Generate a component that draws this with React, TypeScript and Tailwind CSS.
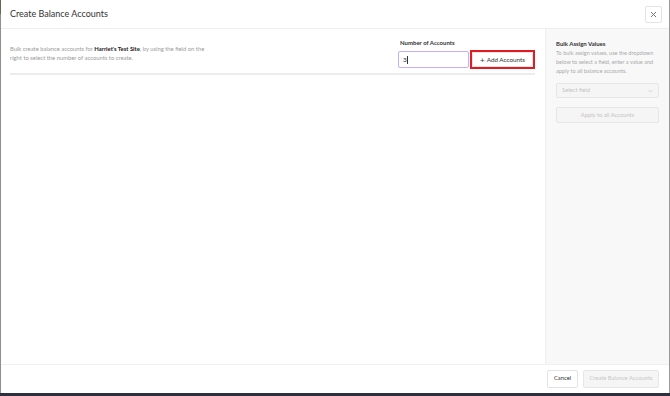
import React from "react";

export default function App() {
  return (
    <div
      className="w-[670px] h-[396px] flex flex-col bg-white overflow-hidden"
      style={{ fontFamily: "Lato, 'Noto Sans', sans-serif" }}
    >
      <div className="flex-1 flex min-h-0">
        <div className="w-[1px] flex flex-col bg-[#8f8f8f]">
          <div className="h-[14px] bg-[#5f6b4f]" />
        </div>
        <div className="flex-1 flex flex-col min-w-0">
          {/* Header */}
          <div className="h-[29px] flex items-center justify-between pl-[9px] pr-[7px] border-b border-[#eeeeee]">
            <div className="text-[9px] text-[#333]">Create Balance Accounts</div>
            <div className="w-[17px] h-[17px] border border-[#e3e3e3] rounded-[2px] flex items-center justify-center">
              <svg width="7" height="7" viewBox="0 0 7 7">
                <path d="M1 1L6 6M6 1L1 6" stroke="#777" strokeWidth="1" />
              </svg>
            </div>
          </div>
          {/* Body */}
          <div className="flex-1 flex min-h-0">
            <div className="flex-1 pl-[9px] pr-[10px] pt-[10px]">
              <div className="flex justify-between items-start">
                <div className="text-[5.85px] leading-[9px] text-[#9b9b9b] w-[200px] pt-[5px]">
                  Bulk create balance accounts for{" "}
                  <span className="font-bold text-[#222]">Harriet's Test Site</span>, by using the field on the right to
                  select the number of accounts to create.
                </div>
                <div className="flex flex-col">
                  <div className="text-[6px] font-bold text-[#333] leading-[8px] mb-[3px] pl-[2px]">
                    Number of Accounts
                  </div>
                  <div className="flex items-center gap-[1px]">
                    <div className="w-[71px] h-[17px] border border-[#c3b0ef] rounded-[2px] flex items-center pl-[4px] text-[6.5px] text-[#333]">
                      3<span className="w-[1px] h-[8px] bg-[#333]" />
                    </div>
                    <div className="border-2 border-[#e01b24]">
                      <div className="w-[61px] h-[15px] border border-[#e6e6e6] rounded-[2px] flex items-center justify-center text-[6.3px] text-[#333]">
                        <span className="text-[8px] mr-[2px] leading-none">+</span>Add Accounts
                      </div>
                    </div>
                  </div>
                </div>
              </div>
              <div className="h-[2px] bg-[#ececec] mt-[4px]" />
            </div>
            {/* Sidebar */}
            <div className="w-[124px] bg-[#f8f8f8] border-l border-[#eeeeee] pl-[10px] pr-[10px] pt-[10px]">
              <div className="text-[6px] font-bold text-[#333] leading-[8px] mt-[1px]">Bulk Assign Values</div>
              <div className="text-[5.55px] leading-[9px] text-[#aaa] mt-[1px]">
                To bulk assign values, use the dropdown below to select a field, enter a value and apply to all
                balance accounts.
              </div>
              <div className="mt-[7px] h-[15px] border border-[#e6e6e6] rounded-[2px] bg-[#f5f5f5] flex items-center justify-between px-[5px] text-[5.8px] text-[#c4c4c4]">
                <span>Select field</span>
                <svg width="5" height="4" viewBox="0 0 5 4">
                  <path d="M0.5 1L2.5 3L4.5 1" stroke="#ccc" strokeWidth="0.8" fill="none" />
                </svg>
              </div>
              <div className="mt-[9px] h-[16px] border border-[#e6e6e6] rounded-[2px] bg-[#f5f5f5] flex items-center justify-center text-[5.8px] text-[#c4c4c4]">
                Apply to all Accounts
              </div>
            </div>
          </div>
          {/* Footer */}
          <div className="h-[29px] border-t border-[#f0f0f0] flex items-center justify-end gap-[5px] pr-[10px] pb-[1px]">
            <div className="h-[18px] w-[31px] border border-[#e3e3e3] rounded-[2px] flex items-center justify-center text-[5.8px] text-[#333]">
              Cancel
            </div>
            <div className="h-[18px] w-[76px] border border-[#e6e6e6] rounded-[2px] bg-[#f5f5f5] flex items-center justify-center text-[5.8px] text-[#c8c8c8]">
              Create Balance Accounts
            </div>
          </div>
        </div>
        <div className="w-[1px] bg-[#9a9a9a]" />
      </div>
      <div className="h-[3px] bg-[#2e2e3e]" />
    </div>
  );
}
